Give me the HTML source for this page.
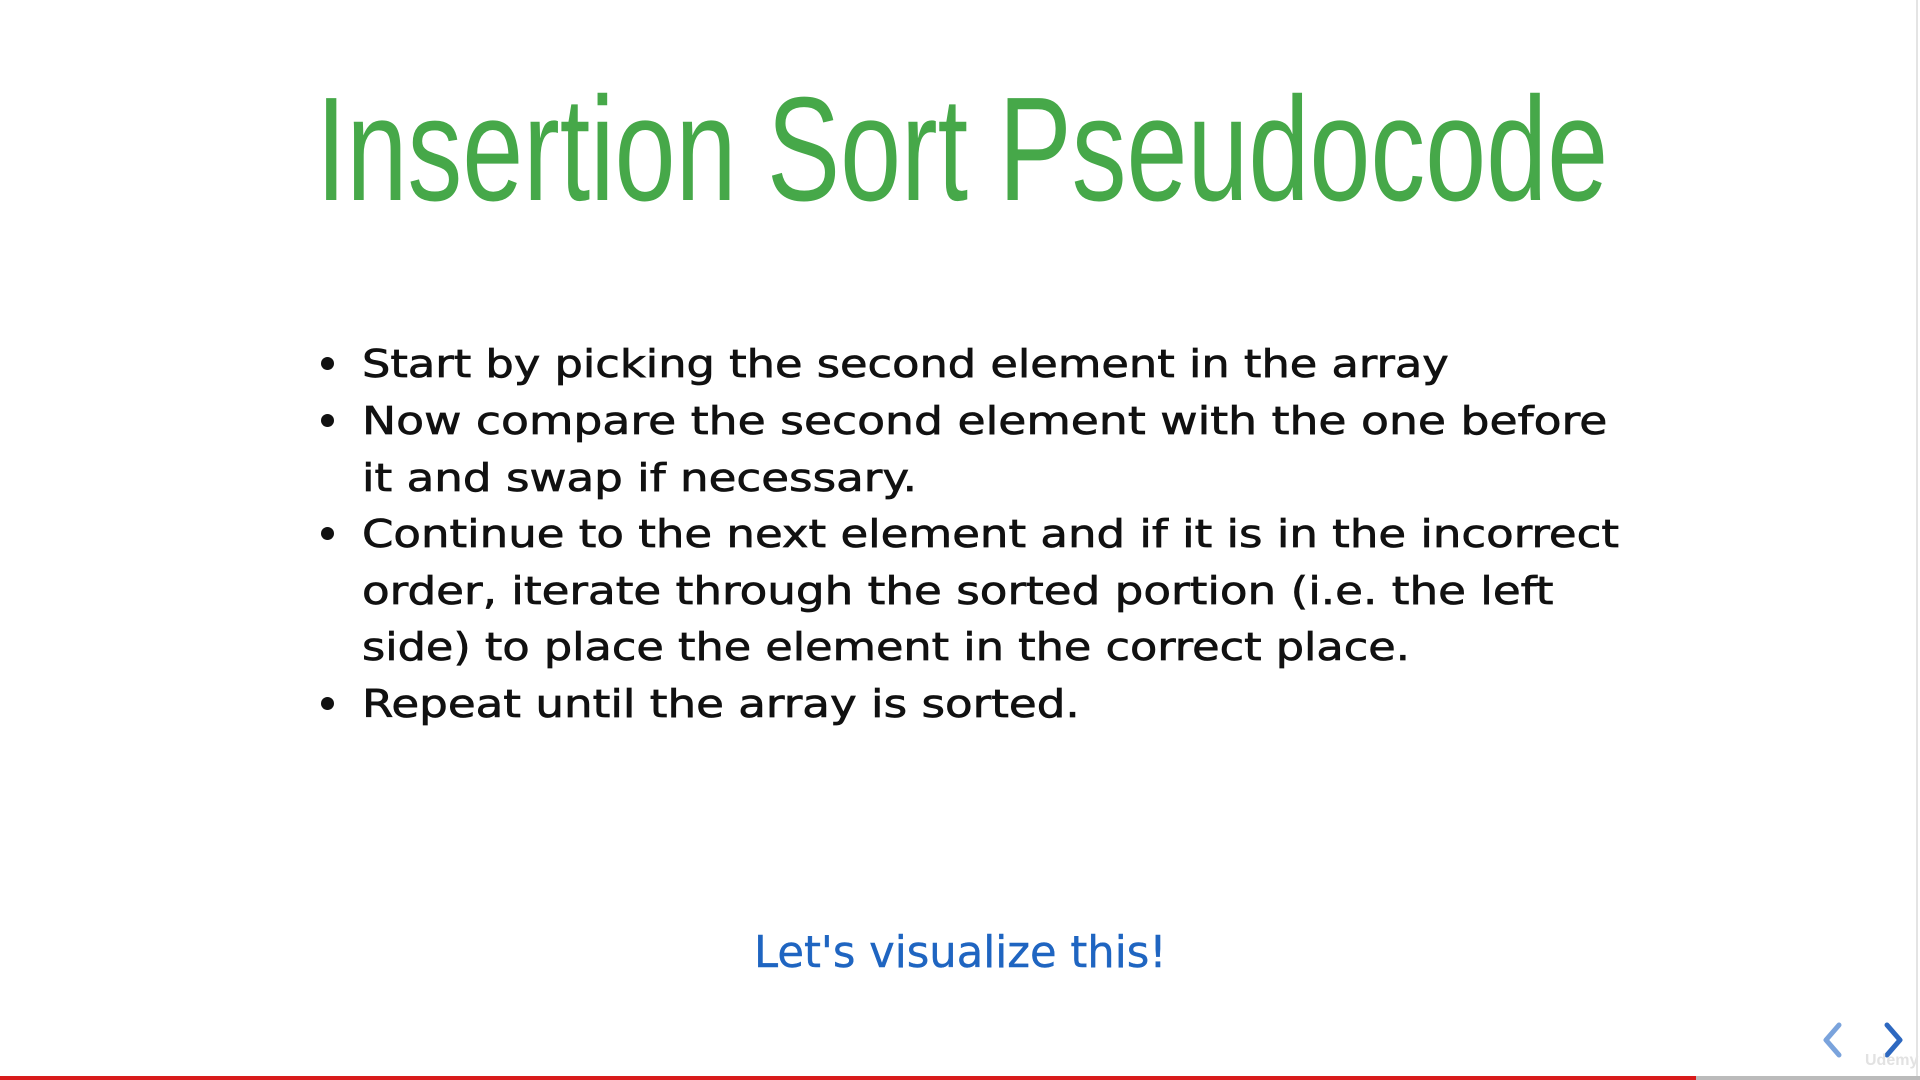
<!DOCTYPE html>
<html><head><meta charset="utf-8">
<style>
html,body{margin:0;padding:0;width:1920px;height:1080px;overflow:hidden;background:#fff;position:relative}
.title{position:absolute;left:316px;top:60px;white-space:nowrap;font-family:"Liberation Sans Narrow","Liberation Sans",sans-serif;font-size:148px;line-height:180px;color:#46a849;transform-origin:0 0}
.list{position:absolute;left:0;top:0;font-family:"DejaVu Sans","Liberation Sans",sans-serif;font-size:38.5px;color:#111;white-space:nowrap;-webkit-text-stroke:0.7px #111}
.l{position:absolute;left:362px;height:50px;line-height:50px}
.b{position:absolute;left:321px;width:13px;height:13px;border-radius:50%;background:#111}
.viz{position:absolute;left:754px;top:923px;font-family:"DejaVu Sans","Liberation Sans",sans-serif;font-size:44px;color:#1f65c1;white-space:nowrap;line-height:60px;-webkit-text-stroke:0.4px #1f65c1}
.bar{position:absolute;left:0;top:1076px;height:4px;width:1696px;background:#d81b1b}
.bar2{position:absolute;left:1696px;top:1076px;height:4px;width:224px;background:#bbb}
.edge{position:absolute;left:1916px;top:0;width:2px;height:1076px;background:#e4e4e4}
</style></head><body>
<div class="title" id="t">Insertion Sort Pseudocode</div>
<div class="list">
<div class="b" style="top:357px"></div>
<div class="l" style="top:340px">Start by picking the second element in the array</div>
<div class="b" style="top:414px"></div>
<div class="l" style="top:397px">Now compare the second element with the one before</div>
<div class="l" style="top:454px">it and swap if necessary.</div>
<div class="b" style="top:527px"></div>
<div class="l" style="top:510px">Continue to the next element and if it is in the incorrect</div>
<div class="l" style="top:567px">order, iterate through the sorted portion (i.e. the left</div>
<div class="l" style="top:623px">side) to place the element in the correct place.</div>
<div class="b" style="top:697px"></div>
<div class="l" style="top:680px">Repeat until the array is sorted.</div>
</div>
<div class="viz" id="v">Let's visualize this!</div>
<svg style="position:absolute;left:1815px;top:1015px" width="105" height="60">
<path d="M24 10 L11 25 L24 40" fill="none" stroke="#7aa3dc" stroke-width="5" stroke-linecap="round" stroke-linejoin="round"/>
<path d="M72 10 L85 25 L72 40" fill="none" stroke="#2d68c0" stroke-width="5" stroke-linecap="round" stroke-linejoin="round"/>
<text x="50" y="50" font-family="Liberation Sans" font-size="16" font-weight="bold" fill="#e2e2e2">Udemy</text>
</svg>
<div class="edge"></div>
<div class="bar"></div><div class="bar2"></div>
<script>
function fit(id,w){var e=document.getElementById(id);var r=e.scrollWidth;e.style.transform='scaleX('+(w/r)+')';}
fit('t',1292);
(function(){var e=document.getElementById('v');var r=e.scrollWidth;e.style.transformOrigin='0 0';e.style.transform='scaleX('+(413/r)+')';})();
(function(){var ls=document.querySelectorAll('.l');var w=[1087,1245,555,1257,1192,1048,718];ls.forEach(function(e,i){e.style.transformOrigin='0 0';e.style.transform='scaleX('+(w[i]/e.scrollWidth)+')';});})();
</script>
</body></html>
